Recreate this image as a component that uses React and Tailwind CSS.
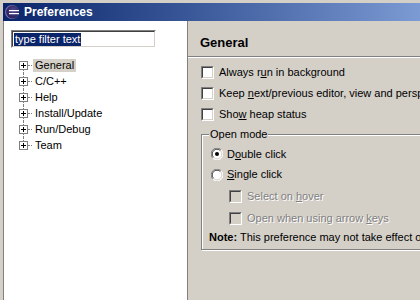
import React from 'react'

const font = { fontFamily: '"Liberation Sans", Arial, sans-serif' }

const treeItems = ['General', 'C/C++', 'Help', 'Install/Update', 'Run/Debug', 'Team']

// classic sunken checkbox, 13x13
function CheckBox({ disabled }) {
  return (
    <div className="w-[13px] h-[13px] shrink-0 border border-t-[#808080] border-l-[#808080] border-b-white border-r-white">
      <div
        className={`w-full h-full border border-t-[#404040] border-l-[#404040] border-b-[#d4d0c8] border-r-[#d4d0c8] ${
          disabled ? 'bg-[#d4d0c8]' : 'bg-white'
        }`}
      />
    </div>
  )
}

function Radio({ checked }) {
  return (
    <svg width="12" height="12" viewBox="0 0 12 12" className="shrink-0">
      <circle cx="6" cy="6" r="5.5" fill="#fff" />
      <path d="M1.8 10.2 A5.5 5.5 0 0 1 10.2 1.8" fill="none" stroke="#808080" strokeWidth="1" />
      <path d="M2.6 9.4 A4.5 4.5 0 0 1 9.4 2.6" fill="none" stroke="#404040" strokeWidth="1" />
      <path d="M10.2 1.8 A5.5 5.5 0 0 1 1.8 10.2" fill="none" stroke="#ffffff" strokeWidth="1" />
      <path d="M9.4 2.6 A4.5 4.5 0 0 1 2.6 9.4" fill="none" stroke="#d4d0c8" strokeWidth="1" />
      {checked && <circle cx="6" cy="6" r="2" fill="#000" />}
    </svg>
  )
}

function PlusBox() {
  return (
    <svg width="9" height="9" viewBox="0 0 9 9" className="relative bg-white">
      <rect x="0.5" y="0.5" width="8" height="8" fill="#fff" stroke="#808080" />
      <path d="M2 4.5 H7 M4.5 2 V7" stroke="#000" />
    </svg>
  )
}

function EclipseIcon() {
  return (
    <svg width="16" height="16" viewBox="0 0 16 16">
      <defs>
        <radialGradient id="ecl" cx="0.55" cy="0.4" r="0.7">
          <stop offset="0" stopColor="#564a9a" />
          <stop offset="1" stopColor="#1e1748" />
        </radialGradient>
      </defs>
      <circle cx="8" cy="8" r="7" fill="#7d74b8" />
      <circle cx="8.6" cy="8" r="6.5" fill="url(#ecl)" />
      <rect x="5" y="6" width="10" height="1.2" fill="#fff" />
      <rect x="5" y="9" width="10" height="1.2" fill="#fff" />
    </svg>
  )
}

// underlined mnemonic letter
const U = ({ children }) => <span className="underline underline-offset-[1px]">{children}</span>

export default function App() {
  return (
    <div
      className="w-[420px] h-[300px] overflow-hidden bg-[#d4d0c8] pl-[3px] pt-[3px] flex flex-col text-[11px] text-black"
      style={font}
    >
      {/* Title bar */}
      <div className="h-[18px] shrink-0 flex items-center gap-[4px] pl-[1px] bg-linear-to-r from-[#0a246a] to-[#7c9ad3]">
        <EclipseIcon />
        <span className="text-white font-bold text-[12px] leading-none">Preferences</span>
      </div>

      <div className="flex flex-1 min-h-0">
        {/* Left: filter + tree */}
        <div className="w-[185px] shrink-0 bg-white border-l border-r border-[#808080] flex flex-col">
          <div className="ml-[7px] mt-[9px] w-[145px] h-[18px] border border-t-[#808080] border-l-[#808080] border-b-white border-r-white">
            <div className="w-full h-full border border-t-[#404040] border-l-[#404040] border-b-[#d4d0c8] border-r-[#d4d0c8] bg-white flex items-center pl-[1px]">
              <span className="bg-[#0a246a] text-white leading-[13px] px-[1px]">type filter text</span>
            </div>
          </div>

          <div className="mt-[9px] flex flex-col">
            {treeItems.map((item, i) => (
              <div key={item} className="h-[16px] flex items-center">
                <div className="ml-[15px] w-[9px] h-full relative flex items-center">
                  <div
                    className={`absolute left-[4px] w-0 border-l border-dotted border-[#808080] ${
                      i === 0 ? 'top-[8px] bottom-0' : i === treeItems.length - 1 ? 'top-0 h-[8px]' : 'top-0 bottom-0'
                    }`}
                  />
                  <PlusBox />
                </div>
                <div className="w-[4px] border-t border-dotted border-[#808080]" />
                <span className={`ml-[1px] px-[2px] leading-[13px] ${i === 0 ? 'bg-[#d4d0c8]' : ''}`}>{item}</span>
              </div>
            ))}
          </div>
        </div>

        {/* Right: General page */}
        <div className="flex-1 min-w-0 overflow-hidden flex flex-col">
          <div className="h-[36px] shrink-0 pl-[12px] pt-[14px] border-b border-[#808080]">
            <span className="font-bold text-[13px] leading-[14px]">General</span>
          </div>
          <div className="h-[1px] bg-white" />

          <div className="pt-[4px] pl-[13px] flex flex-col">
            <div className="h-[21px] flex items-center gap-[5px] whitespace-nowrap">
              <CheckBox />
              <span>Always r<U>u</U>n in background</span>
            </div>
            <div className="h-[21px] flex items-center gap-[5px] whitespace-nowrap">
              <CheckBox />
              <span>Keep <U>n</U>ext/previous editor, view and perspective</span>
            </div>
            <div className="h-[21px] flex items-center gap-[5px] whitespace-nowrap">
              <CheckBox />
              <span>Sho<U>w</U> heap status</span>
            </div>

            <fieldset className="mt-[3px] w-[260px] border border-[#808080] shadow-[inset_1px_1px_0_#fff,1px_1px_0_#fff] pb-[4px]">
              <legend className="ml-[7px] px-[1px] leading-[13px] bg-[#d4d0c8]">Open mode</legend>
              <div className="pt-[3px] flex flex-col whitespace-nowrap">
                <div className="h-[20px] pl-[9px] flex items-center gap-[4px]">
                  <Radio checked />
                  <span>D<U>o</U>uble click</span>
                </div>
                <div className="h-[21px] pl-[9px] flex items-center gap-[4px]">
                  <Radio />
                  <span><U>S</U>ingle click</span>
                </div>
                <div className="h-[22px] pl-[27px] flex items-center gap-[5px]">
                  <CheckBox disabled />
                  <span className="text-[#808080] [text-shadow:1px_1px_0_#fff]">Select on <U>h</U>over</span>
                </div>
                <div className="h-[22px] pl-[27px] flex items-center gap-[5px]">
                  <CheckBox disabled />
                  <span className="text-[#808080] [text-shadow:1px_1px_0_#fff]">Open when using arrow <U>k</U>eys</span>
                </div>
                <div className="h-[16px] pl-[7px] flex items-center">
                  <span><b>Note:</b> This preference may not take effect on all views</span>
                </div>
              </div>
            </fieldset>
          </div>
        </div>
      </div>
    </div>
  )
}
